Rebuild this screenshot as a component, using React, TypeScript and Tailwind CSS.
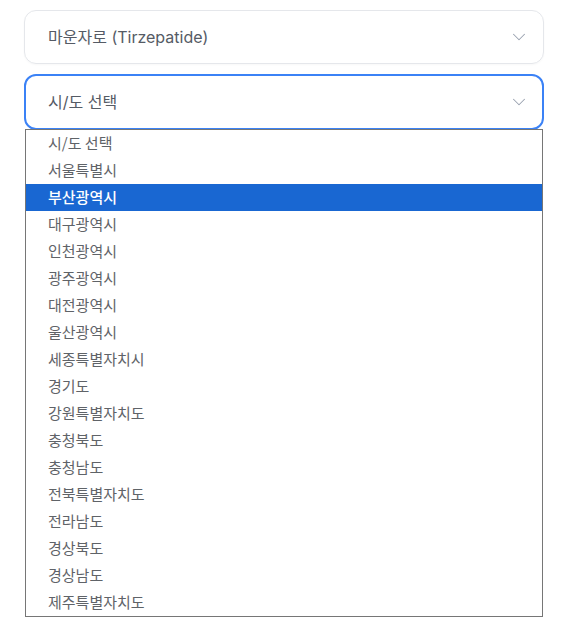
import React from "react";
import { ChevronDown } from "lucide-react";

const regions = [
  "시/도 선택",
  "서울특별시",
  "부산광역시",
  "대구광역시",
  "인천광역시",
  "광주광역시",
  "대전광역시",
  "울산광역시",
  "세종특별자치시",
  "경기도",
  "강원특별자치도",
  "충청북도",
  "충청남도",
  "전북특별자치도",
  "전라남도",
  "경상북도",
  "경상남도",
  "제주특별자치도",
];

const App: React.FC = () => {
  const selected = 2;

  return (
    <div
      className="min-h-[619px] w-full bg-white px-6 pt-[10px]"
      style={{ fontFamily: "Inter, 'Noto Sans CJK KR', sans-serif" }}
    >
      {/* Drug select */}
      <div className="flex h-[54px] items-center justify-between rounded-xl border border-gray-200 pr-[13px] pl-[23px] shadow-[0_1px_2px_rgba(0,0,0,0.03)]">
        <span className="text-[16px] text-[#555b65]">마운자로 (Tirzepatide)</span>
        <ChevronDown size={22} strokeWidth={1.1} className="text-gray-400" />
      </div>

      {/* Region select (open) */}
      <div className="mt-[10px] flex h-[56px] items-center justify-between rounded-xl border-2 border-[#3b82f6] pr-[12px] pl-[22px]">
        <span className="text-[16px] text-[#555b65]">시/도 선택</span>
        <ChevronDown size={22} strokeWidth={1.1} className="text-gray-400" />
      </div>

      {/* Native-like option list */}
      <div
        className="mx-px -mt-[1px] border border-[#767676] bg-white"
        style={{ fontFamily: "'Noto Sans CJK KR', 'Noto Sans', sans-serif" }}
      >
        {regions.map((name, i) => (
          <div
            key={name}
            className={
              i === selected
                ? "flex h-[27px] items-center bg-[#1967d2] pl-[22px] text-[15px] font-medium text-white"
                : "flex h-[27px] items-center pl-[22px] text-[15px] text-[#5f6368]"
            }
          >
            {name}
          </div>
        ))}
      </div>
    </div>
  );
};

export default App;
